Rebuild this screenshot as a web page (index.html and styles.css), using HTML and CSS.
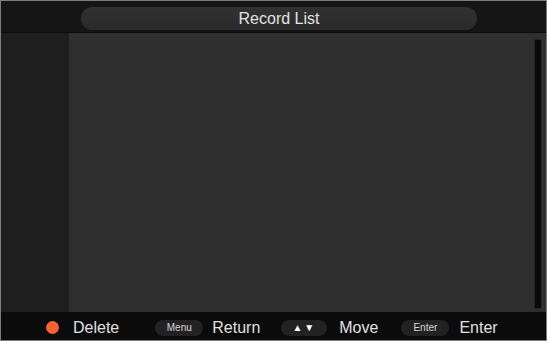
FILE: index.html
```html
<!DOCTYPE html>
<html lang="en">
<head>
    <meta charset="UTF-8">
    <title>Record List</title>
    <link rel="stylesheet" href="styles.css">
</head>
<body>
    <div class="screen">
        <div class="header">
            <div class="title">Record List</div>
        </div>
        <div class="content">
            <div class="side"></div>
            <div class="list">
                <div class="scrollbar"></div>
            </div>
        </div>
        <div class="footer">
            <span class="dot"></span>
            <span class="label label-delete">Delete</span>
            <span class="key key-menu">Menu</span>
            <span class="label label-return">Return</span>
            <span class="key key-arrows">&#9650;&#9660;</span>
            <span class="label label-move">Move</span>
            <span class="key key-enter">Enter</span>
            <span class="label">Enter</span>
        </div>
    </div>
</body>
</html>
```

FILE: styles.css
```css
body {
    margin: 0;
    background: #fff;
    font-family: "Liberation Sans", Arial, sans-serif;
}
.screen {
    width: 545px;
    height: 339px;
    border: 1px solid #7c7c7c;
    background: #141414;
    display: flex;
    flex-direction: column;
}
.header {
    height: 32px;
    background: #151515;
    border-bottom: 1px solid #0c0c0c;
    padding-left: 80px;
    padding-top: 6px;
    box-sizing: border-box;
}
.title {
    width: 396px;
    height: 23px;
    border-radius: 12px;
    background: linear-gradient(#313131, #2a2a2a);
    color: #e2e2e2;
    font-size: 16px;
    line-height: 23px;
    text-align: center;
}
.content {
    display: flex;
    height: 279px;
}
.side {
    width: 68px;
    background: #1e1e1e;
}
.list {
    flex: 1;
    background: #2f2f2f;
    display: flex;
    justify-content: flex-end;
    padding: 6px 4px 3px 0;
}
.scrollbar {
    width: 6px;
    background: #0a0a0a;
    border: 1px solid #262626;
}
.footer {
    flex: 1;
    background: #0b0b0b;
    display: flex;
    align-items: center;
    padding-left: 45px;
    padding-top: 3px;
    color: #e0e0e0;
}
.dot {
    width: 13px;
    height: 13px;
    border-radius: 50%;
    background: #f4642c;
    margin-right: 14px;
}
.label {
    font-size: 16px;
}
.label-delete {
    margin-right: 36px;
}
.label-return {
    margin-right: 21px;
}
.label-move {
    margin-right: 23px;
}
.key {
    height: 16px;
    border-radius: 8px;
    background: #222;
    color: #d8d8d8;
    font-size: 10px;
    line-height: 16px;
    text-align: center;
    margin-right: 9px;
}
.key-menu {
    width: 48px;
}
.key-arrows {
    width: 46px;
    font-size: 10px;
    letter-spacing: 2px;
    color: #fff;
    margin-right: 12px;
}
.key-enter {
    width: 48px;
    margin-right: 10px;
}
```
